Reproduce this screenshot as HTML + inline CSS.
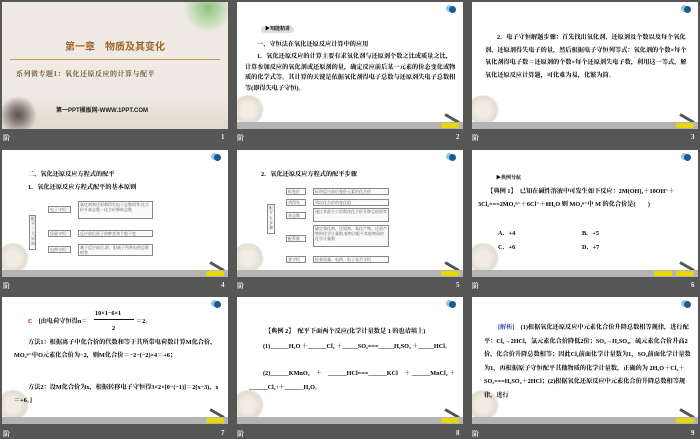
<!DOCTYPE html>
<html><head><meta charset="utf-8"><style>
*{margin:0;padding:0;box-sizing:border-box}
body{width:700px;height:438px;background:#565656;position:relative;overflow:hidden;font-family:"Liberation Serif","Noto Serif CJK SC","Noto Sans CJK SC",serif;}
.s{position:absolute;width:226px;height:127px;background:#fff;overflow:hidden}
.bar{position:absolute;left:0;right:0;bottom:0;height:7px;background:#b4b4b4}
.btn{position:absolute;right:4px;bottom:1px;width:18px;height:5px;background:#e8d800;border-radius:2px}
.flw{position:absolute;left:-6px;bottom:4px;width:34px;height:30px;border-radius:50%;background:radial-gradient(circle,#f1ede4 30%,#e3ddd0 60%,rgba(255,255,255,0) 72%)}
.pen{position:absolute;right:3px;bottom:9px;width:16px;height:3px;background:#555;transform:rotate(30deg)}
.ic{position:absolute;right:7px;top:4px;width:7px;height:7px;border-radius:50%;background:#1c5a94;box-shadow:-3px -1px 0 #8cc8e8}
.ft{position:absolute;color:#eee;font-size:7px;font-weight:bold}
.t{position:absolute;font-size:6.2px;font-weight:bold;line-height:9.5px;color:#000}
.box{position:absolute;border:1px solid #888;font-size:4px;color:#555;line-height:5px;padding:0 1px;background:#fafafa}
</style></head><body>

<!-- slide 1 -->
<div class="s" style="left:2px;top:2px;background:#efebe4">
<div style="position:absolute;left:0;right:0;top:90px;height:37px;background:linear-gradient(#efebe4,#e0d9cc)"></div>
<div style="position:absolute;left:0;bottom:0;width:40px;height:35px;background:radial-gradient(circle at 40% 60%,#5a5450 0,#8c7f7c 25%,rgba(239,235,228,0) 60%)"></div>
<div style="position:absolute;right:0;top:0;width:50px;height:30px;background:radial-gradient(circle at 60% 20%,#8dc27a 0,rgba(239,235,228,0) 65%)"></div>
<div style="position:absolute;left:0;right:0;top:36px;text-align:center;font-family:'Liberation Sans','Noto Sans CJK SC',sans-serif;font-size:10px;font-weight:bold;color:#a0672e">第一章　物质及其变化</div>
<div style="position:absolute;left:8px;right:8px;top:57px;height:1px;background:#c89660"></div>
<div style="position:absolute;left:14px;top:67px;font-size:7px;color:#6e5a3a;font-weight:bold;letter-spacing:0.5px">系列微专题1：氧化还原反应的计算与配平</div>
<div style="position:absolute;left:54px;top:103px;font-family:'Liberation Sans','Noto Sans CJK SC',sans-serif;font-size:6px;font-weight:bold;color:#222">第一PPT模板网-WWW.1PPT.COM</div>
</div>
<div class="ft" style="left:3px;top:133px">阶</div><div class="ft" style="left:221px;top:133px">1</div>

<!-- slide 2 -->
<div class="s" style="left:237px;top:2px"><div class="ic"></div><div class="flw"></div><div class="pen"></div><div class="bar"></div><div class="btn"></div>
<div class="t" style="left:24px;top:24px;font-size:5px;background:#ddd;border-radius:4px;padding:0 4px;line-height:7px">▶知能精讲</div>
<div class="t" style="left:20px;top:38px">一、守恒法在氧化还原反应计算中的应用</div>
<div class="t" style="left:8px;top:50px;width:212px;text-indent:12px;line-height:10.5px">1．氧化还原反应的计算主要有求氧化剂与还原剂个数之比或质量之比，计算参加反应的氧化剂或还原剂的量，确定反应前后某一元素的价态变化或物质的化学式等。其计算的关键是依据氧化剂得电子总数与还原剂失电子总数相等(即得失电子守恒)。</div>
</div>
<div class="ft" style="left:237px;top:133px">阶</div><div class="ft" style="left:456px;top:133px">2</div>

<!-- slide 3 -->
<div class="s" style="left:472px;top:2px"><div class="ic"></div><div class="flw"></div><div class="pen"></div><div class="bar"></div><div class="btn"></div>
<div class="t" style="left:13px;top:30px;width:202px;text-indent:12px;line-height:12.5px">2．电子守恒解题步骤：首先找出氧化剂、还原剂及个数以及每个氧化剂、还原剂得失电子的量，然后根据电子守恒列等式：氧化剂的个数×每个氧化剂得电子数＝还原剂的个数×每个还原剂失电子数，利用这一等式，解氧化还原反应计算题，可化难为易，化繁为简。</div>
</div>
<div class="ft" style="left:472px;top:133px">阶</div><div class="ft" style="left:691px;top:133px">3</div>

<!-- slide 4 -->
<div class="s" style="left:2px;top:150px"><div class="ic"></div><div class="flw"></div><div class="pen"></div><div class="bar"></div><div class="btn"></div>
<div class="t" style="left:26px;top:20px">二、氧化还原反应方程式的配平</div>
<div class="t" style="left:26px;top:33px">1．氧化还原反应方程式配平的基本原则</div>
<div class="box" style="left:27px;top:65px;width:7px;height:35px">配平三大原则</div>
<div class="box" style="left:46px;top:56px;width:23px;height:7px">电子守恒</div>
<div class="box" style="left:46px;top:80px;width:23px;height:7px">质量守恒</div>
<div class="box" style="left:46px;top:96px;width:23px;height:7px">电荷守恒</div>
<div class="box" style="left:76px;top:51px;width:75px;height:18px">氧化剂和还原剂得失电子总数相等,化合价升高总数＝化合价降低总数</div>
<div class="box" style="left:76px;top:80px;width:75px;height:7px">反应前后原子的种类和个数不变</div>
<div class="box" style="left:76px;top:94px;width:75px;height:12px">离子反应前后,阴、阳离子所带电荷总数相等</div>
</div>
<div class="ft" style="left:3px;top:281px">阶</div><div class="ft" style="left:221px;top:281px">4</div>

<!-- slide 5 -->
<div class="s" style="left:237px;top:150px"><div class="ic"></div><div class="flw"></div><div class="pen"></div><div class="bar"></div><div class="btn"></div>
<div class="t" style="left:24px;top:20px">2．氧化还原反应方程式的配平步骤</div>
<div class="box" style="left:30px;top:54px;width:8px;height:30px">配平五步骤</div>
<div class="box" style="left:49px;top:38px;width:20px;height:7px">标变价</div>
<div class="box" style="left:49px;top:49px;width:20px;height:7px">列得失</div>
<div class="box" style="left:49px;top:62px;width:20px;height:7px">求总数</div>
<div class="box" style="left:49px;top:85px;width:20px;height:7px">配系数</div>
<div class="box" style="left:49px;top:106px;width:20px;height:7px">查守恒</div>
<div class="box" style="left:76px;top:38px;width:76px;height:7px">标明反应前后变价元素的化合价</div>
<div class="box" style="left:76px;top:49px;width:76px;height:7px">列出化合价的变化值</div>
<div class="box" style="left:76px;top:58px;width:76px;height:14px">通过求最小公倍数使化合价升降总值相等</div>
<div class="box" style="left:76px;top:75px;width:76px;height:22px">确定氧化剂、还原剂、氧化产物、还原产物的化学计量数,观察法配平其他物质的化学计量数</div>
<div class="box" style="left:76px;top:106px;width:76px;height:7px">检查质量、电荷、电子是否守恒</div>
</div>
<div class="ft" style="left:237px;top:281px">阶</div><div class="ft" style="left:456px;top:281px">5</div>

<!-- slide 6 -->
<div class="s" style="left:472px;top:150px"><div class="ic"></div><div class="flw"></div><div class="pen"></div><div class="bar"></div><div class="btn"></div>
<div style="position:absolute;right:26px;bottom:1px;width:18px;height:5px;background:#e8d800"></div>
<div class="t" style="left:24px;top:24px;font-size:5px">▶典例导航</div>
<div class="t" style="left:6px;top:36px;width:214px;line-height:12.5px">　　【典例 1】　已知在碱性溶液中可发生如下反应：2M(OH)₃＋10OH⁻＋3Cl₂===2MO₄ⁿ⁻＋6Cl⁻＋8H₂O 则 MO₄ⁿ⁻中 M 的化合价是(　　)</div>
<div class="t" style="left:26px;top:79px">A．+4</div><div class="t" style="left:110px;top:79px">B．+5</div>
<div class="t" style="left:26px;top:93px">C．+6</div><div class="t" style="left:110px;top:93px">D．+7</div>
</div>
<div class="ft" style="left:472px;top:281px">阶</div><div class="ft" style="left:691px;top:281px">6</div>

<!-- slide 7 -->
<div class="s" style="left:2px;top:297px"><div class="ic"></div><div class="flw"></div><div class="pen"></div><div class="bar"></div><div class="btn"></div>
<div class="t" style="left:93px;top:12px">10×1−6×1</div>
<div style="position:absolute;left:92px;top:22px;width:40px;height:1px;background:#111"></div>
<div class="t" style="left:26px;top:20px"><span style="color:#d00">C</span>　[由电荷守恒得n＝</div>
<div class="t" style="left:110px;top:27px">2</div><div class="t" style="left:134px;top:20px">＝2。</div>
<div class="t" style="left:12px;top:40px;width:206px;text-indent:14px;line-height:12.5px">方法1：根据离子中化合价的代数和等于其所带电荷数计算M化合价，MO₄ⁿ⁻中O元素化合价为−2，则M化合价＝−2−(−2)×4＝+6；</div>
<div class="t" style="left:12px;top:85px;width:206px;text-indent:14px;line-height:12.5px">方法2：设M化合价为x，根据转移电子守恒得3×2×[0−(−1)]＝2(x−3)，x＝+6。]</div>
</div>
<div class="ft" style="left:3px;top:429px">阶</div><div class="ft" style="left:221px;top:429px">7</div>

<!-- slide 8 -->
<div class="s" style="left:237px;top:297px"><div class="ic"></div><div class="flw"></div><div class="pen"></div><div class="bar"></div><div class="btn"></div>
<div class="t" style="left:28px;top:30px">【典例 2】　配平下面两个反应(化学计量数是 1 的也请填上)</div>
<div class="t" style="left:12px;top:43px;width:210px;text-indent:14px;line-height:13.5px">(1)______H₂O ＋______Cl₂ ＋_____SO₂===_____H₂SO₄ ＋_____HCl。</div>
<div class="t" style="left:12px;top:70px;width:210px;text-indent:14px;line-height:13.5px">(2)______KMnO₄　＋　______HCl===______KCl　＋ ______MnCl₂ ＋ ______Cl₂↑＋______H₂O。</div>
</div>
<div class="ft" style="left:237px;top:429px">阶</div><div class="ft" style="left:456px;top:429px">8</div>

<!-- slide 9 -->
<div class="s" style="left:472px;top:297px"><div class="ic"></div><div class="flw"></div><div class="pen"></div><div class="bar"></div><div class="btn"></div>
<div class="t" style="left:12px;top:24px;width:208px;text-indent:14px;line-height:13.5px"><span style="color:#2a3aa0">[解析]</span>　(1)根据氧化还原反应中元素化合价升降总数相等规律，进行配平：Cl₂→2HCl，氯元素化合价降低2价；SO₂→H₂SO₄，硫元素化合价升高2价，化合价升降总数相等；因此Cl₂前面化学计量数为1，SO₂前面化学计量数为1，再根据原子守恒配平其他物质的化学计量数，正确的为 2H₂O＋Cl₂＋SO₂===H₂SO₄＋2HCl；(2)根据氧化还原反应中元素化合价升降总数相等规律，进行</div>
</div>
<div class="ft" style="left:472px;top:429px">阶</div><div class="ft" style="left:691px;top:429px">9</div>

</body></html>
